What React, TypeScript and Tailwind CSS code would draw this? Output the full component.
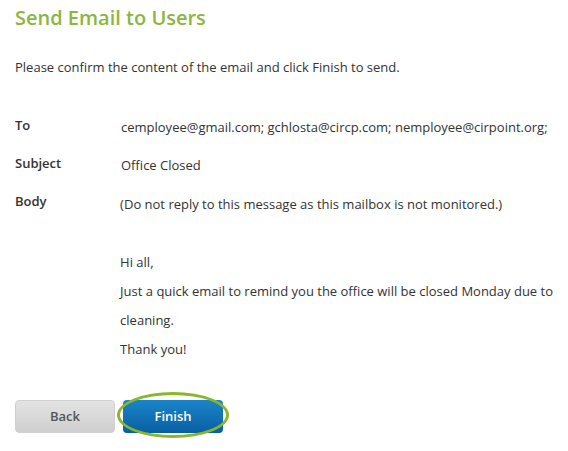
export default function App() {
  const rows: { label: string; value: React.ReactNode }[] = [
    { label: 'To', value: 'cemployee@gmail.com; gchlosta@circp.com; nemployee@cirpoint.org;' },
    { label: 'Subject', value: 'Office Closed' },
  ];

  return (
    <div className="w-[568px] h-[451px] bg-white px-[15px] pt-[4px] text-[13px] text-[#333] font-['Open_Sans',sans-serif]">
      <h1 className="text-[20px] font-semibold leading-[28px] text-[#8db63c]">Send Email to Users</h1>
      <p className="mt-[25px] leading-[20px]">Please confirm the content of the email and click Finish to send.</p>

      <div className="mt-[38px] flex flex-col">
        {rows.map((r) => (
          <div key={r.label} className="flex h-[38px]">
            <div className="w-[106px] font-semibold leading-[20px]">{r.label}</div>
            <div className="leading-[20px] pt-[2px] whitespace-nowrap">{r.value}</div>
          </div>
        ))}
        <div className="flex">
          <div className="w-[106px] font-semibold leading-[20px]">Body</div>
          <div className="pt-[3px] leading-[29px] -mt-[4px] whitespace-nowrap">
            <div>(Do not reply to this message as this mailbox is not monitored.)</div>
            <div>&nbsp;</div>
            <div>Hi all,</div>
            <div>Just a quick email to remind you the office will be closed Monday due to</div>
            <div>cleaning.</div>
            <div>Thank you!</div>
          </div>
        </div>
      </div>

      <div className="mt-[36px] flex gap-[8px]">
        <button className="w-[100px] h-[33px] rounded-[4px] bg-gradient-to-b from-[#e3e3e3] to-[#cfcfcf] border border-[#d0d0d0] font-semibold text-[#555]">
          Back
        </button>
        <div className="relative">
          <button className="w-[100px] h-[33px] rounded-[4px] bg-gradient-to-b from-[#1b85c9] to-[#0a5fa3] font-semibold text-white">
            Finish
          </button>
          <div className="absolute left-[-6px] top-[-8px] w-[112px] h-[46px] rounded-[50%] border-[3px] border-[#8ab72a]" />
        </div>
      </div>
    </div>
  );
}
